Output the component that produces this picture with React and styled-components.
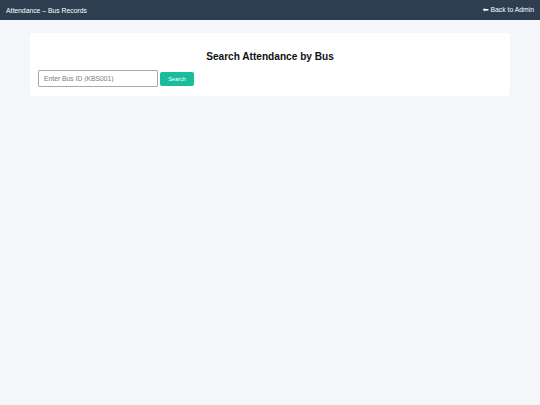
import React from "react";
import styled, { createGlobalStyle } from "styled-components";

const Global = createGlobalStyle`
  html, body { margin: 0; padding: 0; }
  body {
    background: #f4f6f9;
    font-family: "Liberation Sans", Arial, sans-serif;
    min-height: 405px;
  }
`;

const Header = styled.header`
  height: 20px;
  box-sizing: border-box;
  background: #2c3e50;
  color: #fff;
  display: flex;
  align-items: center;
  justify-content: space-between;
  padding: 0 6px;
  font-size: 6.8px;
`;

const Title = styled.div`
  font-size: 6.8px;
`;

const BackLink = styled.a`
  color: #fff;
  text-decoration: none;
  font-size: 6.8px;
`;

const Arrow = styled.span`
  font-family: "DejaVu Sans", sans-serif;
  font-size: 7px;
  margin-right: 2px;
`;

const Container = styled.main`
  width: 480px;
  margin: 13px auto 0;
`;

const Card = styled.section`
  background: #fff;
  border-radius: 4px;
  padding: 8px 8px 9px;
  box-sizing: border-box;
  height: 63px;
`;

const Heading = styled.h2`
  margin: 10px 0 7.5px;
  text-align: center;
  font-size: 10.125px;
  font-weight: bold;
  color: #111;
`;

const Row = styled.div`
  display: flex;
  align-items: center;
  gap: 2px;
`;

const Input = styled.input`
  width: 120px;
  height: 17px;
  box-sizing: border-box;
  border: 1px solid #a8a8a8;
  border-radius: 1px;
  padding: 0 5px;
  font-family: "Liberation Sans", Arial, sans-serif;
  font-size: 6.75px;
  color: #333;
  outline: none;
  &::placeholder { color: #7a7a7a; }
`;

const Button = styled.button`
  width: 34px;
  height: 14px;
  margin-top: 1px;
  box-sizing: border-box;
  border: none;
  border-radius: 2px;
  background: #1abc9c;
  color: #fff;
  font-family: "Liberation Sans", Arial, sans-serif;
  font-size: 5.6px;
  padding: 0;
  cursor: pointer;
`;

export default function App() {
  return (
    <>
      <Global />
      <Header>
        <Title>Attendance – Bus Records</Title>
        <BackLink href="#">
          <Arrow>⬅</Arrow>Back to Admin
        </BackLink>
      </Header>
      <Container>
        <Card>
          <Heading>Search Attendance by Bus</Heading>
          <Row>
            <Input placeholder="Enter Bus ID (KBS001)" />
            <Button>Search</Button>
          </Row>
        </Card>
      </Container>
    </>
  );
}
